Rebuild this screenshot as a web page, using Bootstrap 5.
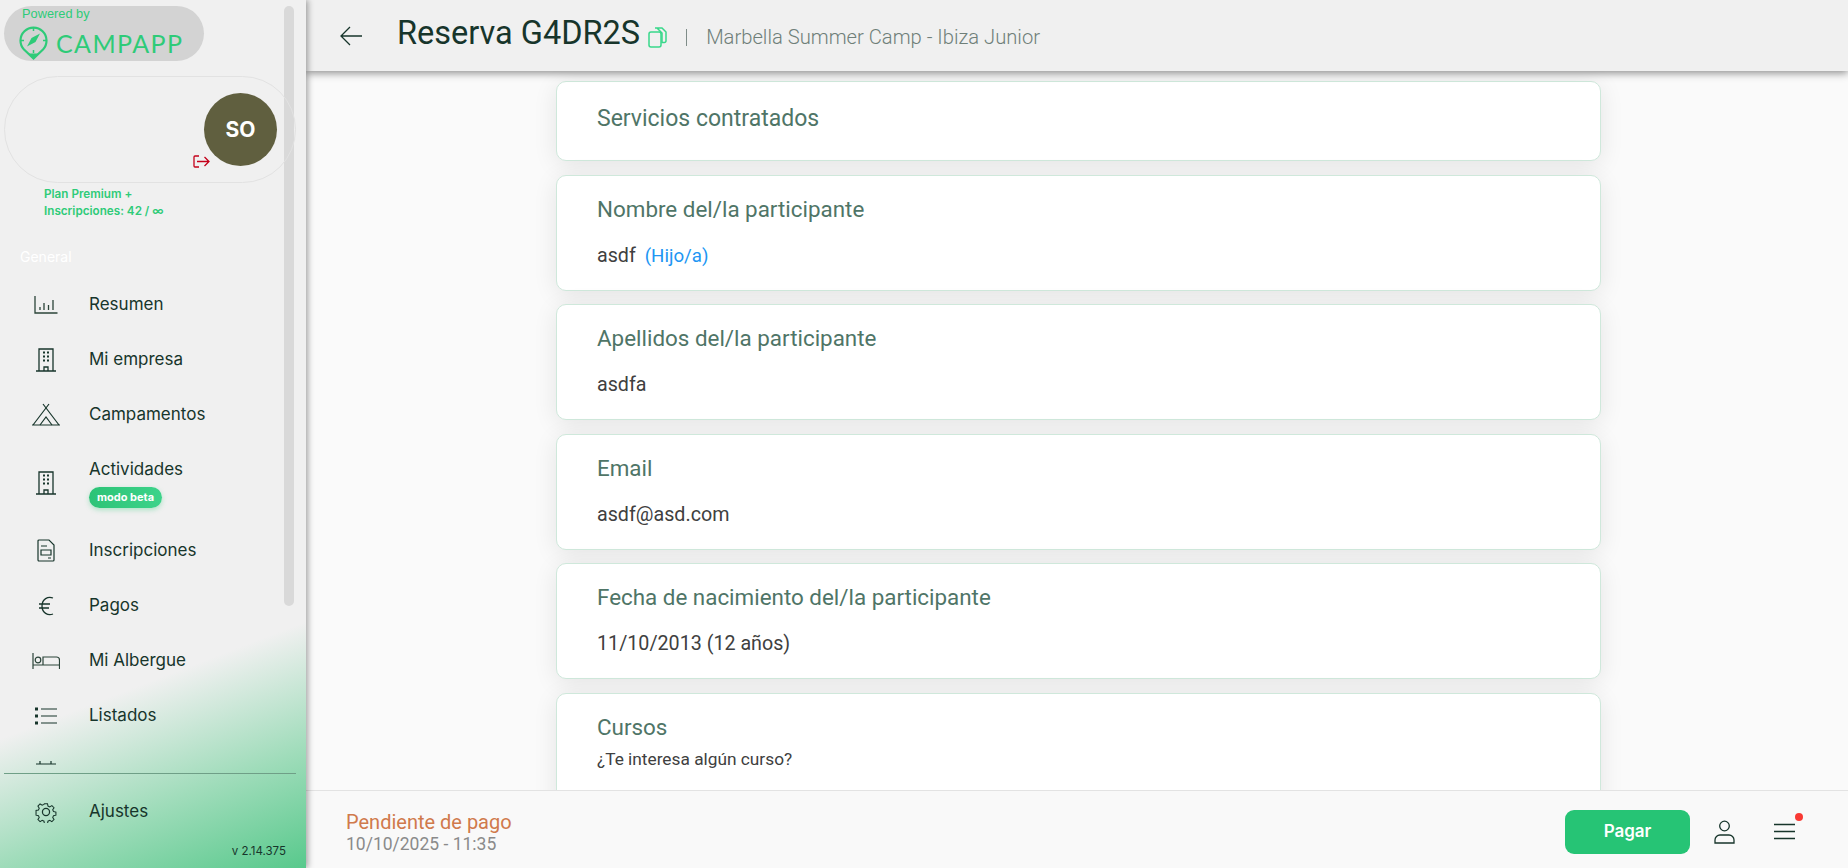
<!DOCTYPE html>
<html lang="es">
<head>
<meta charset="utf-8">
<title>Reserva G4DR2S</title>
<link rel="stylesheet" href="https://cdn.jsdelivr.net/npm/bootstrap@5.3.0/dist/css/bootstrap.min.css">
<style>
html,body{height:868px;overflow:hidden}
body{font-family:Roboto,sans-serif;background:#fafafa;color:#333}
.app-shell{height:868px}
.side{width:306px;flex:none;height:868px;position:relative;z-index:3;box-shadow:2px 0 6px rgba(0,0,0,.35);
 background:linear-gradient(159deg,#f0f0f0 75%,#9fdcba 88%,#58c98c 100%);font-family:Inter,sans-serif;padding:6px 10px 0 4px;color:#17352b}
.side-scroll{position:absolute;left:284px;top:6px;width:10px;height:600px;border-radius:6px;background:#d9d9d9}
.logo-pill{width:200px;height:55px;border-radius:28px;background:#d3d3d3;color:#2ecb78;padding:2px 0 0 18px;line-height:1}
.powered{font-size:12.800px;margin:0 0 5px 0;font-family:"Liberation Sans",sans-serif}
.logo-svg{margin-left:-3px;flex:none}
.logo-word{font-family:Lato,sans-serif;font-size:25px;font-weight:400;letter-spacing:1.400px;line-height:26px;margin:0 0 0 8px}
.user-pill{width:292px;height:107px;margin-top:15px;border:1px solid #e2e2e2;border-radius:54px;padding:16px 18px 0 0;position:relative}
.avatar{width:73px;height:73px;border-radius:50%;background:#605f3f;color:#fff;font-size:21px;font-weight:700}
.logout{position:absolute;left:188px;top:78px}
.plan{font-size:11.700px;font-weight:600;line-height:17px;color:#2ecb78;margin:3px 0 0 40px}
.sec-title{font-size:14px;color:#fff;margin:27px 0 0 16px;line-height:20px}
.nav-wrap{height:488px;overflow:hidden;margin-top:10px}
.menu-row{height:55px;padding-left:12px;font-size:17px;flex:none}
.menu-row.tall{height:81px}
.menu-row.foot{height:62px;margin-top:7px}
.ico{width:60px;flex:none;margin-right:13px;display:flex;justify-content:center}
.ico svg{display:block}
.beta-line{line-height:21px;margin-top:3px}
.beta{display:inline-block;font-size:11px;font-weight:700;color:#fff;background:linear-gradient(90deg,#2cc376,#3dd38a);border-radius:11px;padding:3px 8px;line-height:15px;box-shadow:0 2px 5px rgba(46,203,120,.35)}
.side-sep{border-top:1px solid #6f9f87;width:292px;margin-top:8px}
.ver{font-size:11.500px;text-align:right;color:#17352b;padding-right:10px;line-height:14px;margin-top:1px}
.main-col{min-width:0;height:868px}
.top-bar{height:71px;flex:none;background:#f0f0f0;box-shadow:0 2px 8px rgba(0,0,0,.45);position:relative;z-index:2;padding-left:34px}
.page-title{font-size:32.500px;color:#17352b;margin:0 0 4px 35px;font-weight:400;line-height:1}
.sep-bar{width:1px;height:17px;background:#7f8c88;margin:4px 19px 0 19px}
.sub-title{font-size:20.200px;font-weight:300;color:#6f7f79;margin-top:3px}
.content{flex:1;overflow:hidden;padding:10px 0 0 250px}
.info-box{width:1045px;background:#fff;border:1px solid #cfe8db;border-radius:10px;box-shadow:0 4px 24px rgba(0,0,0,.09);padding:20px 40px;margin-bottom:13.500px;height:116px}
.info-box.short{height:80px;padding-top:24px}
.box-title{font-size:22.400px;color:#4f7567;line-height:26px;margin-bottom:22px}
.short .box-title{font-size:23px}
.box-value{font-size:19.700px;color:#404040;line-height:24px}
.box-hint{font-size:17.300px;color:#404040;line-height:22px;margin-top:-14px}
.rel{font-size:18.700px;color:#2196f3;margin-left:4px}
.bottom-bar{height:78px;flex:none;background:#f9f9f9;border-top:1px solid #e3e3e3;padding:0 0 0 40px;position:relative;z-index:2}
.status-col{padding-top:5px}
.status{font-size:20px;color:#d07a4c;line-height:23px}
.stamp{font-size:17.500px;color:#8a8a8a;line-height:20px}
.foot-actions{margin-right:34px;padding-top:4px}
.pay-btn{width:125px;height:44px;background:#26c475;border:0;border-radius:9px;color:#fff;font-family:Inter,sans-serif;font-weight:600;font-size:17px}
.pay-btn:hover{background:#26c475;color:#fff}
.act-ico{width:60px;display:flex;justify-content:center;position:relative}
.red-dot{position:absolute;width:8px;height:8px;border-radius:50%;background:#f93a34;top:-10px;left:41px}
</style>
</head>
<body>
<div class="app-shell d-flex">
  <aside class="side d-flex flex-column">
    <div class="side-scroll"></div>
    <div class="logo-pill">
      <div class="powered">Powered by</div>
      <div class="d-flex align-items-center">
        <svg class="logo-svg" width="29" height="34" viewBox="0 0 29 34" fill="none"><path d="M14.500 32.500 5 23.500A13 13 0 1 1 24 23.500Z" stroke="#2ecb78" stroke-width="2.200"/><path d="M14.500 33 9 27.500h11Z" fill="#2ecb78"/><path d="M21 7.500 16.500 16 8 20.500 12.500 12Z" fill="#2ecb78"/><path d="M14.500 2v3M14.500 24v3M2 14.500h3M24 14.500h3" stroke="#2ecb78" stroke-width="1.500"/></svg>
        <span class="logo-word">CAMPAPP</span>
      </div>
    </div>
    <div class="user-pill d-flex justify-content-end">
      <div class="avatar d-flex align-items-center justify-content-center">SO</div>
      <svg class="logout" width="17" height="13" viewBox="0 0 17 13" fill="none" stroke="#c4001a" stroke-width="1.300"><path d="M6 1H2a1 1 0 0 0-1 1v9a1 1 0 0 0 1 1h4"/><path d="M4 6.500h12M11.500 2l4.500 4.500-4.500 4.500"/></svg>
    </div>
    <div class="plan">Plan Premium +<br>Inscripciones: 42 / ∞</div>
    <div class="sec-title">General</div>
    <nav class="nav-wrap">
      <div class="menu-row d-flex align-items-center"><span class="ico"><svg width="24" height="18" viewBox="0 0 24 18" fill="none" stroke="#2b4439" stroke-width="1.300"><path d="M1 0v17h22.500"/><path d="M6 11v3M10 7v7M14.500 9v5M19 4v10"/></svg></span>Resumen</div>
      <div class="menu-row d-flex align-items-center"><span class="ico"><svg width="20" height="24" viewBox="0 0 20 24" fill="none" stroke="#17352b" stroke-width="1.300"><path d="M3 23V1h14v22M0 23h20"/><path d="M8 23v-4h4v4"/><path d="M7 4.500h2M11 4.500h2M7 8.500h2M11 8.500h2M7 12.500h2M11 12.500h2" stroke-width="2"/></svg></span>Mi empresa</div>
      <div class="menu-row d-flex align-items-center"><span class="ico"><svg width="28" height="23" viewBox="0 0 28 23" fill="none" stroke="#17352b" stroke-width="1.200"><path d="M11 1 27 22M17 1 1 22M0 22h28"/><path d="M8 22l6-8 6 8"/></svg></span>Campamentos</div>
      <div class="menu-row tall d-flex align-items-center"><span class="ico"><svg width="20" height="24" viewBox="0 0 20 24" fill="none" stroke="#17352b" stroke-width="1.300"><path d="M3 23V1h14v22M0 23h20"/><path d="M8 23v-4h4v4"/><path d="M7 4.500h2M11 4.500h2M7 8.500h2M11 8.500h2M7 12.500h2M11 12.500h2" stroke-width="2"/></svg></span><div><div>Actividades</div><div class="beta-line"><span class="beta">modo beta</span></div></div></div>
      <div class="menu-row d-flex align-items-center"><span class="ico"><svg width="18" height="23" viewBox="0 0 18 23" fill="none" stroke="#17352b" stroke-width="1.200"><path d="M2 1h10l5 5v15a1 1 0 0 1-1 1H2a1 1 0 0 1-1-1V2a1 1 0 0 1 1-1Z"/><path d="M4 11h10v5H4ZM4 7h6M11 19h3"/></svg></span>Inscripciones</div>
      <div class="menu-row d-flex align-items-center"><span class="ico"><svg width="15" height="20" viewBox="0 0 15 20" fill="none" stroke="#17352b" stroke-width="1.300"><path d="M14 2C9 0 3 3 3 10s6 10 11 8M0 8h11M0 12h10"/></svg></span>Pagos</div>
      <div class="menu-row d-flex align-items-center"><span class="ico"><svg width="28" height="16" viewBox="0 0 28 16" fill="none" stroke="#2b4439" stroke-width="1.200"><path d="M1 0v16M27.500 16V7a3 3 0 0 0-3-3H11v8M1 12h26"/><circle cx="6" cy="7" r="2.800"/></svg></span>Mi Albergue</div>
      <div class="menu-row d-flex align-items-center"><span class="ico"><svg width="22" height="18" viewBox="0 0 22 18" fill="none" stroke="#17352b" stroke-width="1.200"><path d="M6 2h16M6 9h16M6 16h16"/><path d="M0 2h3M0 9h3M0 16h3" stroke-width="3"/></svg></span>Listados</div>
      <div class="menu-row d-flex align-items-center"><span class="ico"><svg width="20" height="24" viewBox="0 0 20 24" fill="none" stroke="#17352b" stroke-width="1.200"><path d="M4 2v3M15 2v3M0 5h20"/></svg></span></div>
    </nav>
    <div class="side-sep"></div>
    <div class="menu-row foot d-flex align-items-center"><span class="ico"><svg width="22" height="22" viewBox="0 0 16 16" fill="none" stroke="#17352b" stroke-width=".9"><circle cx="8" cy="8" r="2.600"/><path d="M6.700 1h2.600l.4 2 1.500.7 1.800-1.100 1.800 1.800-1.100 1.800.7 1.500 2 .4v2.600l-2 .4-.7 1.500 1.100 1.800-1.800 1.800-1.800-1.100-1.500.7-.4 2H6.700l-.4-2-1.500-.7-1.800 1.100-1.800-1.800 1.100-1.800-.7-1.500-2-.4V6.700l2-.4.700-1.500-1.100-1.800 1.800-1.800 1.800 1.100 1.500-.7Z" transform="translate(1.100 1.100) scale(.86)"/></svg></span>Ajustes</div>
    <div class="ver">v 2.14.375</div>
  </aside>
  <div class="main-col flex-grow-1 d-flex flex-column">
    <header class="top-bar d-flex align-items-center">
      <svg width="22" height="20" viewBox="0 0 22 20" fill="none" stroke="#17352b" stroke-width="1.300"><path d="M22 10H1M10 1 1 10l9 9"/></svg>
      <h1 class="page-title">Reserva G4DR2S</h1>
      <svg class="ms-2 mt-1" width="19" height="21" viewBox="0 0 19 21" fill="none" stroke="#38d88a" stroke-width="1.500"><path d="M7 1h7l4 4v9a1.500 1.500 0 0 1-1.500 1.500H14V6L9 1"/><rect x="1" y="5" width="12" height="15" rx="2"/></svg>
      <span class="sep-bar"></span>
      <span class="sub-title">Marbella Summer Camp - Ibiza Junior</span>
    </header>
    <main class="content">
      <section class="info-box short"><div class="box-title">Servicios contratados</div></section>
      <section class="info-box"><div class="box-title">Nombre del/la participante</div><div class="box-value">asdf <span class="rel">(Hijo/a)</span></div></section>
      <section class="info-box"><div class="box-title">Apellidos del/la participante</div><div class="box-value">asdfa</div></section>
      <section class="info-box"><div class="box-title">Email</div><div class="box-value">asdf@asd.com</div></section>
      <section class="info-box"><div class="box-title">Fecha de nacimiento del/la participante</div><div class="box-value">11/10/2013 (12 años)</div></section>
      <section class="info-box"><div class="box-title">Cursos</div><div class="box-hint">¿Te interesa algún curso?</div></section>
    </main>
    <footer class="bottom-bar d-flex align-items-center justify-content-between">
      <div class="status-col"><div class="status">Pendiente de pago</div><div class="stamp">10/10/2025 - 11:35</div></div>
      <div class="foot-actions d-flex align-items-center">
        <button class="btn pay-btn me-1" type="button">Pagar</button>
        <span class="act-ico"><svg width="21" height="24" viewBox="0 0 21 24" fill="none" stroke="#17352b" stroke-width="1.300"><circle cx="10.500" cy="6" r="4.800"/><path d="M1 23v-3a5 5 0 0 1 5-5h9a5 5 0 0 1 5 5v3Z"/></svg></span>
        <span class="act-ico"><svg width="21" height="17" viewBox="0 0 21 17" fill="none" stroke="#17352b" stroke-width="1.300"><path d="M0 1.500h21M0 8.500h21M0 15.500h21"/></svg><i class="red-dot"></i></span>
      </div>
    </footer>
  </div>
</div>
<script src="https://cdn.jsdelivr.net/npm/bootstrap@5.3.0/dist/js/bootstrap.bundle.min.js"></script>
</body>
</html>
